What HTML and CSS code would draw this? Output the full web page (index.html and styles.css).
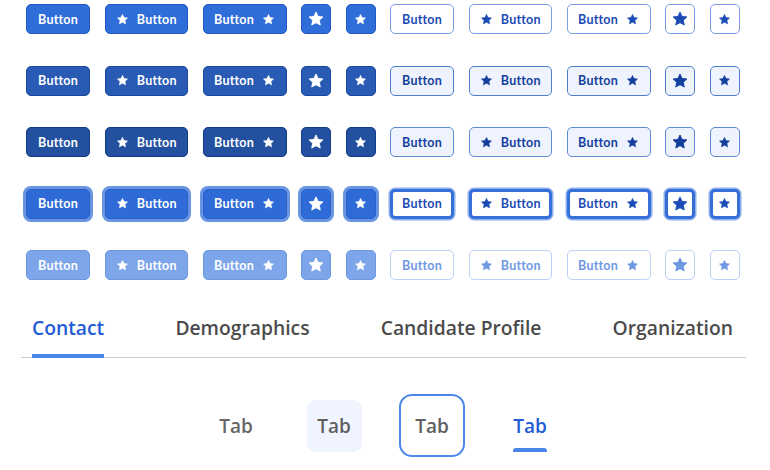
FILE: index.html
```html
<!DOCTYPE html>
<html>
<head>
<meta charset="utf-8">
<link rel="stylesheet" href="styles.css">
</head>
<body>
<svg width="0" height="0" class="defs">
  <defs>
    <path id="star" d="M12 2.6l2.75 5.9 6.45.75-4.8 4.4 1.3 6.4L12 16.9l-5.7 3.15 1.3-6.4-4.8-4.4 6.45-.75z"/>
  </defs>
</svg>
<div class="grid">
  <div class="row default">
    <button class="btn fill w1">Button</button>
    <button class="btn fill w2"><svg class="ic" viewBox="0 0 24 24"><use href="#star"/></svg>Button</button>
    <button class="btn fill w3">Button<svg class="ic" viewBox="0 0 24 24"><use href="#star"/></svg></button>
    <button class="btn fill sq"><svg class="ic lg" viewBox="0 0 24 24"><use href="#star"/></svg></button>
    <button class="btn fill sq"><svg class="ic" viewBox="0 0 24 24"><use href="#star"/></svg></button>
    <button class="btn line w1">Button</button>
    <button class="btn line w2"><svg class="ic" viewBox="0 0 24 24"><use href="#star"/></svg>Button</button>
    <button class="btn line w3">Button<svg class="ic" viewBox="0 0 24 24"><use href="#star"/></svg></button>
    <button class="btn line sq"><svg class="ic lg" viewBox="0 0 24 24"><use href="#star"/></svg></button>
    <button class="btn line sq"><svg class="ic" viewBox="0 0 24 24"><use href="#star"/></svg></button>
  </div>
  <div class="row hover">
    <button class="btn fill w1">Button</button>
    <button class="btn fill w2"><svg class="ic" viewBox="0 0 24 24"><use href="#star"/></svg>Button</button>
    <button class="btn fill w3">Button<svg class="ic" viewBox="0 0 24 24"><use href="#star"/></svg></button>
    <button class="btn fill sq"><svg class="ic lg" viewBox="0 0 24 24"><use href="#star"/></svg></button>
    <button class="btn fill sq"><svg class="ic" viewBox="0 0 24 24"><use href="#star"/></svg></button>
    <button class="btn line w1">Button</button>
    <button class="btn line w2"><svg class="ic" viewBox="0 0 24 24"><use href="#star"/></svg>Button</button>
    <button class="btn line w3">Button<svg class="ic" viewBox="0 0 24 24"><use href="#star"/></svg></button>
    <button class="btn line sq"><svg class="ic lg" viewBox="0 0 24 24"><use href="#star"/></svg></button>
    <button class="btn line sq"><svg class="ic" viewBox="0 0 24 24"><use href="#star"/></svg></button>
  </div>
  <div class="row active">
    <button class="btn fill w1">Button</button>
    <button class="btn fill w2"><svg class="ic" viewBox="0 0 24 24"><use href="#star"/></svg>Button</button>
    <button class="btn fill w3">Button<svg class="ic" viewBox="0 0 24 24"><use href="#star"/></svg></button>
    <button class="btn fill sq"><svg class="ic lg" viewBox="0 0 24 24"><use href="#star"/></svg></button>
    <button class="btn fill sq"><svg class="ic" viewBox="0 0 24 24"><use href="#star"/></svg></button>
    <button class="btn line w1">Button</button>
    <button class="btn line w2"><svg class="ic" viewBox="0 0 24 24"><use href="#star"/></svg>Button</button>
    <button class="btn line w3">Button<svg class="ic" viewBox="0 0 24 24"><use href="#star"/></svg></button>
    <button class="btn line sq"><svg class="ic lg" viewBox="0 0 24 24"><use href="#star"/></svg></button>
    <button class="btn line sq"><svg class="ic" viewBox="0 0 24 24"><use href="#star"/></svg></button>
  </div>
  <div class="row focus">
    <button class="btn fill w1">Button</button>
    <button class="btn fill w2"><svg class="ic" viewBox="0 0 24 24"><use href="#star"/></svg>Button</button>
    <button class="btn fill w3">Button<svg class="ic" viewBox="0 0 24 24"><use href="#star"/></svg></button>
    <button class="btn fill sq"><svg class="ic lg" viewBox="0 0 24 24"><use href="#star"/></svg></button>
    <button class="btn fill sq"><svg class="ic" viewBox="0 0 24 24"><use href="#star"/></svg></button>
    <button class="btn line w1">Button</button>
    <button class="btn line w2"><svg class="ic" viewBox="0 0 24 24"><use href="#star"/></svg>Button</button>
    <button class="btn line w3">Button<svg class="ic" viewBox="0 0 24 24"><use href="#star"/></svg></button>
    <button class="btn line sq"><svg class="ic lg" viewBox="0 0 24 24"><use href="#star"/></svg></button>
    <button class="btn line sq"><svg class="ic" viewBox="0 0 24 24"><use href="#star"/></svg></button>
  </div>
  <div class="row disabled">
    <button class="btn fill w1">Button</button>
    <button class="btn fill w2"><svg class="ic" viewBox="0 0 24 24"><use href="#star"/></svg>Button</button>
    <button class="btn fill w3">Button<svg class="ic" viewBox="0 0 24 24"><use href="#star"/></svg></button>
    <button class="btn fill sq"><svg class="ic lg" viewBox="0 0 24 24"><use href="#star"/></svg></button>
    <button class="btn fill sq"><svg class="ic" viewBox="0 0 24 24"><use href="#star"/></svg></button>
    <button class="btn line w1">Button</button>
    <button class="btn line w2"><svg class="ic" viewBox="0 0 24 24"><use href="#star"/></svg>Button</button>
    <button class="btn line w3">Button<svg class="ic" viewBox="0 0 24 24"><use href="#star"/></svg></button>
    <button class="btn line sq"><svg class="ic lg" viewBox="0 0 24 24"><use href="#star"/></svg></button>
    <button class="btn line sq"><svg class="ic" viewBox="0 0 24 24"><use href="#star"/></svg></button>
  </div>
</div>

<div class="tabs">
  <div class="tab current">Contact</div>
  <div class="tab">Demographics</div>
  <div class="tab">Candidate Profile</div>
  <div class="tab">Organization</div>
</div>

<div class="states">
  <div class="slot"><div class="st">Tab</div></div>
  <div class="slot"><div class="st st-hover">Tab</div></div>
  <div class="slot"><div class="st st-focus">Tab</div></div>
  <div class="slot"><div class="st st-active">Tab</div></div>
</div>
</body>
</html>
```

FILE: styles.css
```css
* { box-sizing: border-box; }
html, body { margin: 0; padding: 0; background: #fff; }
body {
  width: 770px;
  height: 470px;
  overflow: hidden;
  font-family: Lato, "Noto Sans", "Liberation Sans", sans-serif;
}
.defs { position: absolute; width: 0; height: 0; }

.grid {
  padding: 4px 0 0 26px;
  display: flex;
  flex-direction: column;
  gap: 31.5px;
}
.row {
  display: flex;
  gap: 14.5px;
  height: 30px;
}
.btn {
  height: 30px;
  border-radius: 5px;
  border: 1px solid;
  display: flex;
  align-items: center;
  justify-content: center;
  gap: 8px;
  padding: 0;
  font-family: inherit;
  font-weight: 700;
  font-size: 12.5px;
  letter-spacing: 0.2px;
}
.w1 { width: 64px; }
.w2 { width: 83.5px; }
.w3 { width: 84px; }
.sq { width: 30px; }
.ic { width: 13px; height: 13px; fill: currentColor; stroke: currentColor; stroke-width: 1.2; stroke-linejoin: round; flex: none; }
.ic.lg { width: 18px; height: 18px; }

/* filled */
.fill { color: #fff; }
.default .fill { background: #2f6dd8; border-color: #2157c2; }
.hover .fill { background: #2a5bb4; border-color: #1b489f; }
.active .fill { background: #24519f; border-color: #123b8a; }
.focus .fill { background: #2e6bd6; border-color: #2a60c8; box-shadow: 0 0 0 3px #6894e2; }
.disabled .fill { background: #7da5e9; border-color: #6d97e1; }

/* outline */
.line { background: #fff; color: #1b4cb5; }
.default .line { border-color: #79a0e6; }
.hover .line { background: #eef3fd; border-color: #4e7dcb; color: #153f9c; }
.active .line { background: #eef3fd; border-color: #5e89d4; color: #153f9c; }
.focus .line { border: 3px solid #3470d8; box-shadow: 0 0 0 1.5px #8fb0ec; }
.disabled .line { border-color: #bcd1f4; color: #6e98e2; }

/* tabs */
.tabs {
  margin: 25px 0 0 21px;
  width: 725px;
  display: flex;
  justify-content: space-between;
  padding: 0 13px 0 11px;
  border-bottom: 1.5px solid #cbcbcb;
  font-family: "Open Sans", Lato, sans-serif;
}
.tab {
  font-size: 19.3px;
  font-weight: 600;
  color: #4b4b4b;
  padding: 11px 0 14px;
  line-height: 24px;
  border-bottom: 4px solid transparent;
  margin-bottom: -1.5px;
}
.tab.current {
  color: #1f5bd5;
  border-bottom-color: #4a86e8;
}

.states {
  margin: 36px 0 0 187px;
  display: grid;
  grid-template-columns: repeat(4, 98px);
  height: 64px;
  align-items: center;
  font-family: "Open Sans", Lato, sans-serif;
}
.slot { display: flex; justify-content: center; align-items: center; }
.st {
  font-size: 19px;
  font-weight: 600;
  color: #666;
  line-height: 24px;
  display: flex;
  align-items: center;
  justify-content: center;
}
.st-hover {
  width: 55px;
  height: 52px;
  background: #eff4fe;
  border-radius: 9px;
  color: #5f5f5f;
}
.st-focus {
  width: 66px;
  height: 63px;
  border: 2.5px solid #4c87e9;
  border-radius: 13px;
  color: #5f5f5f;
}
.st-active {
  color: #1f5bd5;
  position: relative;
  height: 52px;
}
.st-active::after {
  content: "";
  position: absolute;
  left: 0;
  right: 0;
  bottom: 0;
  height: 4px;
  background: #4a86e8;
  border-radius: 3px 3px 0 0;
}
```
